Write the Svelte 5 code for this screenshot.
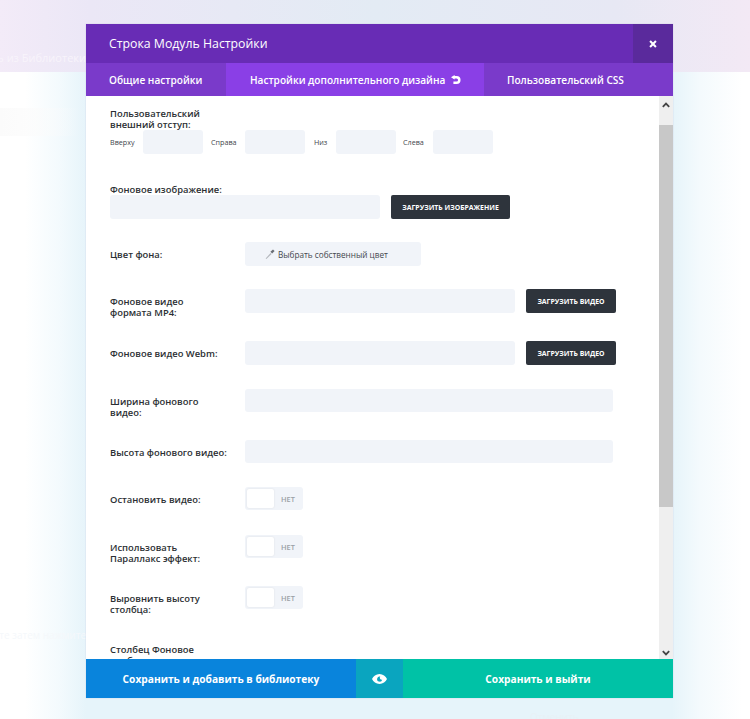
<script lang="ts">
const offsets = [
	{ label: 'Вверху', cls: 'w-top' },
	{ label: 'Справа', cls: 'w-right' },
	{ label: 'Низ', cls: 'w-bottom' },
	{ label: 'Слева', cls: 'w-left' }
];
</script>

<div class="page">
  <div class="backdrop">
    <div class="band">
      <span class="ghost">Добавить из Библиотеки</span>
    </div>
    <div class="stripe"></div>
    <span class="ghost-low">Выберите затем нажмите</span>
    <span class="ghost-foot">Отменить</span>
  </div>

  <div class="modal">
    <header class="head">
      <h1>Строка Модуль Настройки</h1>
      <button class="close" aria-label="Закрыть">
        <svg width="8" height="8" viewBox="0 0 9 9"><path d="M1.2 1.2l6.6 6.6M7.8 1.2L1.2 7.8" stroke="#fff" stroke-width="2.3" fill="none"/></svg>
      </button>
    </header>

    <nav class="tabs">
      <span class="tab first">Общие настройки</span>
      <span class="tab active">
        Настройки дополнительного дизайна
        <svg class="undo" width="10" height="10" viewBox="0 0 10 10"><path d="M2.400 2.200h3.100a2.700 2.700 0 0 1 0 5.600H2.400" stroke="#fff" stroke-width="2.500" fill="none"/><path d="M0 2.200L3.600 0v4.400z" fill="#fff"/></svg>
      </span>
      <span class="tab last">Пользовательский CSS</span>
    </nav>

    <div class="body">
      <div class="content">
        <div class="label stacked">Пользовательский<br />внешний отступ:</div>
        <div class="offsets">
          {#each offsets as o}
            <span class="small {o.cls}">{o.label}</span>
            <span class="input off"></span>
          {/each}
        </div>

        <div class="label image-label">Фоновое изображение:</div>
        <div class="image-row">
          <span class="input image"></span>
          <span class="btn wide">ЗАГРУЗИТЬ ИЗОБРАЖЕНИЕ</span>
        </div>

        <div class="row gap-s">
          <div class="label">Цвет фона:</div>
          <span class="input color">
            <svg width="10" height="10" viewBox="0 0 10 10"><path d="M.6 9.400l5-5.400 1 1-5.200 5z" fill="#b4b7bd"/><path d="M5.400 2.800L8 .4l1.600 1.600-2.400 2.600z" fill="#6a6e75"/></svg>
            Выбрать собственный цвет
          </span>
        </div>

        <div class="row gap-s">
          <div class="label">Фоновое видео<br />формата MP4:</div>
          <span class="input video"></span>
          <span class="btn narrow">ЗАГРУЗИТЬ ВИДЕО</span>
        </div>

        <div class="row gap-xl">
          <div class="label">Фоновое видео Webm:</div>
          <span class="input video"></span>
          <span class="btn narrow">ЗАГРУЗИТЬ ВИДЕО</span>
        </div>

        <div class="row gap-m">
          <div class="label">Ширина фонового<br />видео:</div>
          <span class="input full"></span>
        </div>

        <div class="row gap-l">
          <div class="label">Высота фонового видео:</div>
          <span class="input full"></span>
        </div>

        <div class="row gap-s">
          <div class="label">Остановить видео:</div>
          <span class="toggle"><span class="knob"></span><span class="no">НЕТ</span></span>
        </div>

        <div class="row gap-m">
          <div class="label">Использовать<br />Параллакс эффект:</div>
          <span class="toggle"><span class="knob"></span><span class="no">НЕТ</span></span>
        </div>

        <div class="row gap-l">
          <div class="label">Выровнить высоту<br />столбца:</div>
          <span class="toggle"><span class="knob"></span><span class="no">НЕТ</span></span>
        </div>

        <div class="label tail">Столбец Фоновое<br />изображение:</div>
      </div>

      <div class="scrollbar">
        <span class="arrow">
          <svg width="8" height="6" viewBox="0 0 8 6"><path d="M.8 4.800L4 1.600l3.200 3.200" stroke="#444" stroke-width="1.800" fill="none"/></svg>
        </span>
        <span class="thumb"></span>
        <span class="arrow down">
          <svg width="8" height="6" viewBox="0 0 8 6"><path d="M.8 1.200L4 4.400l3.200-3.200" stroke="#444" stroke-width="1.800" fill="none"/></svg>
        </span>
      </div>
    </div>

    <footer class="foot">
      <span class="save-lib">Сохранить и добавить в библиотеку</span>
      <span class="preview">
        <svg width="15" height="10" viewBox="0 0 15 10"><path fill-rule="evenodd" d="M7.500 0C11 0 13.600 2.400 15 5c-1.400 2.600-4 5-7.500 5S1.400 7.600 0 5C1.400 2.400 4 0 7.500 0zM8.300 2.500a2.600 2.600 0 1 0 1.900 3.300 2 2 0 0 1-1.900-3.300z" fill="#fff"/></svg>
      </span>
      <span class="save-exit">Сохранить и выйти</span>
    </footer>
  </div>
</div>

<style>
  :global(body) {
    margin: 0;
    background: #fff;
  }
  .page {
    position: relative;
    width: 750px;
    height: 719px;
    overflow: hidden;
    font-family: "Open Sans", "Noto Sans", sans-serif;
    background: #fff;
  }
  .backdrop {
    position: absolute;
    inset: 0;
    background: linear-gradient(90deg, #fff 25px, #f3fafd 60px, #e6f4fa 86px, #e6f4fa 672px, #f4fafd 700px, #fff 742px);
  }
  .band {
    position: relative;
    height: 72px;
    background: linear-gradient(90deg, #f3ebf8 0, #ebe7f6 12%, #e3ebf4 50%, #e7e8f4 82%, #f3e9f5 100%);
  }
  .stripe {
    height: 28px;
    margin-top: 36px;
    background: linear-gradient(90deg, #fbfbfb, rgba(255, 255, 255, 0) 80px);
  }
  .ghost {
    position: absolute;
    right: 664px;
    top: 50px;
    font-size: 11px;
    white-space: nowrap;
    color: #f8f4fb;
  }
  .ghost-low {
    position: absolute;
    right: 664px;
    top: 628px;
    font-size: 10px;
    white-space: nowrap;
    color: #f5f8fb;
  }
  .ghost-foot {
    position: absolute;
    left: 530px;
    top: 710px;
    font-size: 10px;
    color: #e8f1f6;
  }
  .modal {
    position: absolute;
    left: 86px;
    top: 24px;
    width: 587px;
    height: 674px;
    display: flex;
    flex-direction: column;
    background: #fff;
    box-shadow: 0 0 1px rgba(80, 60, 140, 0.25);
  }
  .head {
    height: 39px;
    flex-shrink: 0;
    display: flex;
    align-items: center;
    justify-content: space-between;
    background: #682cb5;
    color: #fff;
  }
  h1 {
    margin: 0 0 0 23px;
    font-size: 12.3px;
    font-weight: 400;
  }
  .close {
    width: 40px;
    height: 39px;
    padding: 0;
    border: 0;
    background: #5a2a9c;
    display: flex;
    align-items: center;
    justify-content: center;
  }
  .tabs {
    height: 33px;
    flex-shrink: 0;
    display: flex;
    color: #fff;
    font-size: 10.1px;
    font-weight: 600;
    background: #7a3aca;
  }
  .tab {
    display: flex;
    align-items: center;
    white-space: nowrap;
  }
  .first {
    width: 140px;
    padding-left: 23px;
    box-sizing: border-box;
  }
  .active {
    width: 258px;
    padding-left: 24px;
    box-sizing: border-box;
    background: #8a3fe6;
  }
  .last {
    padding-left: 23px;
  }
  .undo {
    margin-left: 6px;
  }
  .body {
    flex: 1;
    min-height: 0;
    display: flex;
  }
  .content {
    flex: 1;
    min-width: 0;
    overflow: hidden;
    padding: 12px 0 0 24px;
    color: #2b2f33;
  }
  .label {
    width: 135px;
    flex-shrink: 0;
    padding-top: 7px;
    font-size: 9.4px;
    line-height: 11px;
    font-weight: 600;
    white-space: nowrap;
  }
  .stacked {
    padding-top: 0;
    height: 22px;
  }
  .input {
    display: block;
    height: 24px;
    background: #f1f4f9;
    border-radius: 3px;
    flex-shrink: 0;
  }
  .offsets {
    display: flex;
    align-items: center;
  }
  .small {
    font-size: 7.2px;
    color: #44484e;
  }
  .w-top {
    width: 33px;
  }
  .w-right {
    width: 34px;
    margin-left: 8px;
  }
  .w-bottom {
    width: 22px;
    margin-left: 9px;
  }
  .w-left {
    width: 30px;
    margin-left: 7px;
  }
  .off {
    width: 60px;
  }
  .image-label {
    margin-top: 30px;
    padding-top: 0;
    width: auto;
  }
  .image-row {
    display: flex;
  }
  .image {
    width: 270px;
  }
  .btn {
    display: flex;
    align-items: center;
    justify-content: center;
    height: 24px;
    box-sizing: border-box;
    background: #2e343c;
    border-radius: 2px;
    color: #fff;
    font-size: 6.9px;
    font-weight: 700;
    white-space: nowrap;
    flex-shrink: 0;
  }
  .wide {
    width: 119px;
    margin-left: 11px;
  }
  .narrow {
    width: 90px;
    margin-left: 11px;
  }
  .row {
    display: flex;
    align-items: flex-start;
    height: 24px;
  }
  .gap-s {
    margin-top: 23px;
  }
  .gap-m {
    margin-top: 24px;
  }
  .gap-l {
    margin-top: 27px;
  }
  .gap-xl {
    margin-top: 28px;
  }
  .color {
    width: 176px;
    box-sizing: border-box;
    padding-left: 20px;
    display: flex;
    align-items: center;
    gap: 3px;
    font-size: 8.2px;
    color: #44484e;
  }
  .video {
    width: 270px;
  }
  .full {
    width: 368px;
    height: 23px;
  }
  .toggle {
    width: 58px;
    height: 23px;
    box-sizing: border-box;
    padding: 2px;
    display: flex;
    align-items: center;
    background: #f1f4f9;
    border-radius: 3px;
  }
  .knob {
    width: 27px;
    height: 19px;
    background: #fff;
    border-radius: 2px;
    box-shadow: 0 0 2px rgba(0, 0, 0, 0.1);
  }
  .no {
    margin-left: 7px;
    font-size: 7.4px;
    font-weight: 600;
    color: #9aa0a6;
  }
  .tail {
    margin-top: 34px;
    padding-top: 0;
  }
  .scrollbar {
    width: 14px;
    flex-shrink: 0;
    display: flex;
    flex-direction: column;
    background: #efefef;
  }
  .arrow {
    height: 17px;
    display: flex;
    align-items: center;
    justify-content: center;
    flex-shrink: 0;
  }
  .thumb {
    display: block;
    height: 382px;
    margin-top: 12px;
    background: #c8c8c8;
  }
  .arrow.down {
    height: 12px;
    margin-top: auto;
  }
  .foot {
    height: 39px;
    flex-shrink: 0;
    display: flex;
    color: #fff;
    font-size: 10.2px;
    font-weight: 700;
  }
  .foot span {
    display: flex;
    align-items: center;
    justify-content: center;
  }
  .save-lib {
    width: 270px;
    background: #0984dc;
  }
  .preview {
    width: 47px;
    background: #0aa5bf;
  }
  .save-exit {
    flex: 1;
    background: #00c2a6;
  }
</style>
